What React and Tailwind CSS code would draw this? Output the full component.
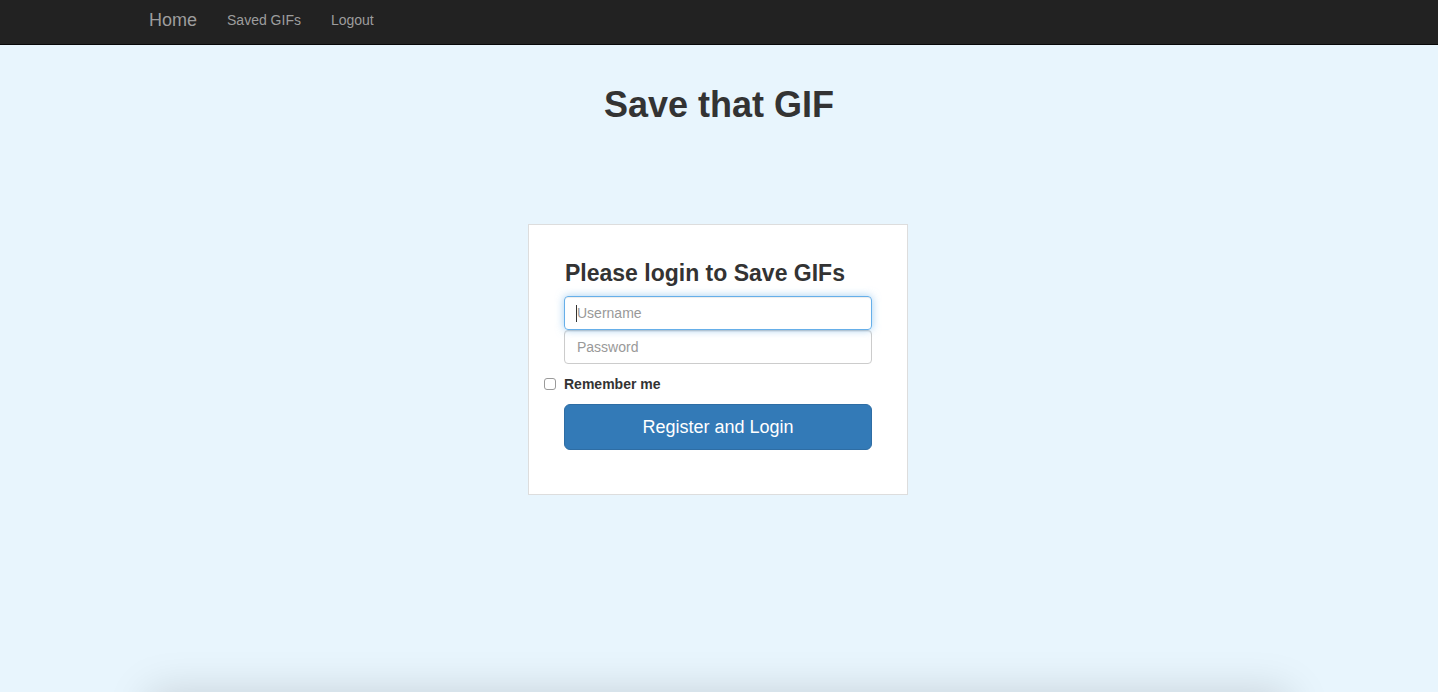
import React from 'react';

const font = { fontFamily: '"Liberation Sans", Arial, sans-serif' };

const NavBar = () => (
  <nav className="h-[45px] bg-[#222222] border-b border-[#080808]">
    <div className="w-[1170px] mx-auto flex items-center h-full pb-[4px]">
      <a className="px-[15px] text-[18px] text-[#9d9d9d] leading-[20px]">Home</a>
      <a className="px-[15px] text-[14px] text-[#9d9d9d] leading-[20px]">Saved GIFs</a>
      <a className="px-[15px] text-[14px] text-[#9d9d9d] leading-[20px]">Logout</a>
    </div>
  </nav>
);

const LoginCard = () => (
  <div className="w-[380px] bg-white border border-[#dddddd] pt-[35px] pb-[44px] pl-[35px] pr-[35px]">
    <h3 className="text-[23px] font-bold leading-[26px] text-[#333333] ml-px">Please login to Save GIFs</h3>
    <div className="mt-[10px] flex flex-col">
      <div className="relative">
        <input
          className="w-full h-[34px] px-[12px] text-[14px] border border-[#66afe9] rounded-[4px] outline-none shadow-[inset_0_1px_1px_rgba(0,0,0,0.075),0_0_8px_rgba(102,175,233,0.6)] placeholder:text-[#999999]"
          placeholder="Username"
        />
        <span className="absolute left-[12px] top-[9px] w-px h-[17px] bg-[#333333]" />
      </div>
      <input
        className="w-full h-[34px] px-[12px] text-[14px] border border-[#cccccc] rounded-[4px] outline-none shadow-[inset_0_1px_1px_rgba(0,0,0,0.075)] placeholder:text-[#999999]"
        placeholder="Password"
      />
    </div>
    <div className="mt-[10px] flex items-center h-[20px] -ml-[20px]">
      <span className="w-[12px] h-[12px] border border-[#9a9a9a] rounded-[3px] bg-white" />
      <span className="ml-[8px] text-[14px] font-bold text-[#333333]">Remember me</span>
    </div>
    <button className="mt-[10px] w-full h-[46px] bg-[#337ab7] border border-[#2e6da4] rounded-[6px] text-white text-[18px]">
      Register and Login
    </button>
  </div>
);

export default function App() {
  return (
    <div className="h-[692px] bg-[#e8f5fd] overflow-hidden" style={font}>
      <NavBar />
      <div className="h-[647px] pt-[40px]">
        <h1 className="text-center text-[36px] font-bold leading-[40px] text-[#333333]">Save that GIF</h1>
        <div className="mt-[99px] flex justify-center pr-[2px]">
          <LoginCard />
        </div>
      </div>
      <div className="w-[1140px] h-[200px] mx-auto bg-[#e8f5fd] shadow-[0_0_40px_rgba(0,0,0,0.15)]" />
    </div>
  );
}
